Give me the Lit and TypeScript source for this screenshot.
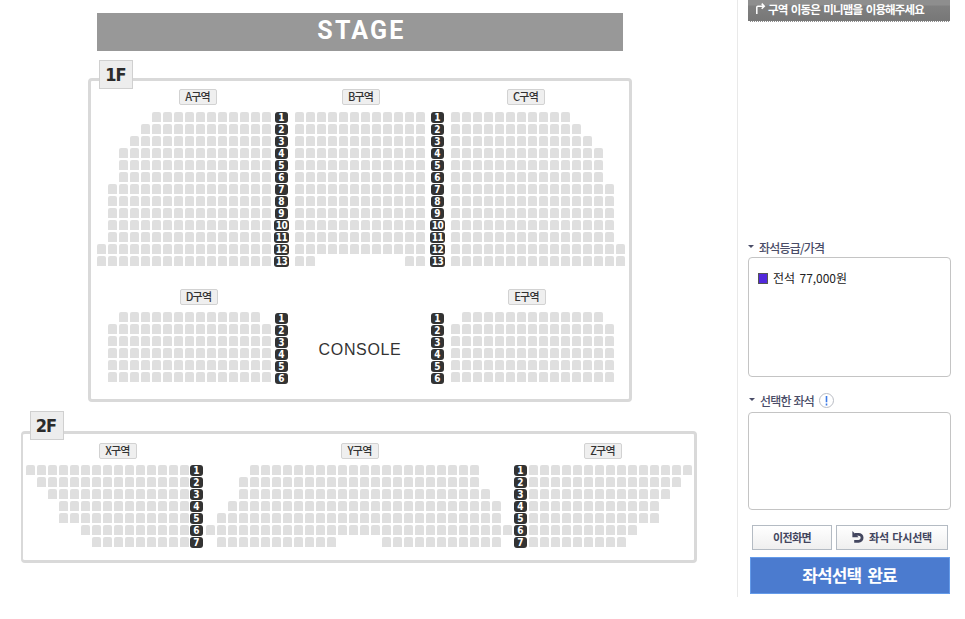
// app.ts
// Seat selection view: hall map on the left, price and selection panel on the right

import { LitElement, html, css } from "lit";
import { customElement, property } from "lit/decorators.js";

// A row alternates empty and seat counts, starting with the empty ones
type Row = number[];

const range = (n: number) => Array.from({ length: n }, (_, i) => i);

const A_ROWS: Row[] = [
  [5, 11],
  [4, 12],
  [3, 13],
  [2, 14],
  [2, 14],
  [2, 14],
  [1, 15],
  [1, 15],
  [1, 15],
  [1, 15],
  [1, 15],
  [0, 16],
  [0, 16],
];
const B_ROWS: Row[] = [...range(12).map(() => [0, 12]), [0, 2, 8, 2]];
const C_ROWS: Row[] = A_ROWS.map(([, count]) => [0, count]);
const D_ROWS: Row[] = [[1, 13], ...range(5).map(() => [0, 15])];
const X_ROWS: Row[] = [
  [0, 15],
  [1, 14],
  [2, 13],
  [3, 12],
  [3, 12],
  [5, 10],
  [6, 9],
];
const Y_ROWS: Row[] = [
  [4, 21],
  [3, 22],
  [3, 23],
  [2, 25],
  [1, 26],
  [0, 28],
  [1, 11, 4, 11],
];
const Z_ROWS: Row[] = X_ROWS.map(([, count]) => [0, count]);

@customElement("seat-section")
export class SeatSection extends LitElement {
  @property() name = "";
  @property({ attribute: false }) rows: Row[] = [];

  static styles = css`
    :host {
      display: flex;
      flex-direction: column;
    }

    .name {
      box-sizing: border-box;
      width: 38px;
      height: 16px;
      margin-left: var(--label-offset, 0);
      margin-bottom: var(--label-gap, 7px);
      border: 1px solid #d2d2d2;
      border-radius: 2px;
      background: #efefef;
      color: #333;
      font-size: 11px;
      font-weight: 500;
      line-height: 13px;
      letter-spacing: -0.8px;
      text-align: center;
      text-indent: -1px;
      white-space: nowrap;
    }

    .row {
      display: flex;
      gap: 2px;
      height: 10px;
      margin-bottom: 2px;
    }

    .cell {
      width: 9px;
      height: 10px;
    }

    .seat {
      background: #dfdfdf;
      border-radius: 2px 2px 0 0;
    }
  `;

  render() {
    return html`
      <div class="name">${this.name}</div>
      ${this.rows.map(
        (row) => html`<div class="row">
          ${row.map((count, i) =>
            range(count).map(
              () => html`<div class=${i % 2 ? "cell seat" : "cell"}></div>`
            )
          )}
        </div>`
      )}
    `;
  }
}

@customElement("row-numbers")
export class RowNumbers extends LitElement {
  @property({ type: Number }) count = 0;

  static styles = css`
    :host {
      display: flex;
      flex-direction: column;
      align-items: center;
      gap: 1px;
      width: 15px;
      padding-top: 23px;
    }

    .number {
      width: 13px;
      height: 11px;
      border-radius: 3px;
      background: #333;
      color: #fff;
      font: bold 10px/11px "DejaVu Sans Condensed", "DejaVu Sans", sans-serif;
      text-align: center;
    }

    .wide {
      width: 15px;
      letter-spacing: -0.5px;
    }
  `;

  render() {
    return range(this.count).map(
      (i) =>
        html`<div class=${i > 8 ? "number wide" : "number"}>${i + 1}</div>`
    );
  }
}

@customElement("seat-map")
export class SeatMap extends LitElement {
  static styles = css`
    :host {
      display: block;
      box-sizing: border-box;
      width: 737px;
      padding-top: 13px;
    }

    .stage {
      width: 526px;
      height: 38px;
      margin-left: 97px;
      background: #989898;
      color: #fff;
      font: bold 25px/36px Roboto, sans-serif;
      letter-spacing: 2.2px;
      text-align: center;
      text-indent: 3px;
    }

    .floor {
      position: relative;
      box-sizing: border-box;
      border: 3px solid #d9d9d9;
      border-radius: 4px;
    }

    .first {
      width: 544px;
      height: 324px;
      margin: 27px 0 0 88px;
      padding-top: 8px;
    }

    .second {
      width: 676px;
      height: 132px;
      margin: 29px 0 0 21px;
      border-left-width: 2px;
      padding-top: 9px;
    }

    .tag {
      position: absolute;
      top: -21px;
      left: 8px;
      box-sizing: border-box;
      width: 34px;
      height: 29px;
      border: 1px solid #d0d0d0;
      background: #ededed;
      color: #2b2b2b;
      font: bold 18px/27px "DejaVu Sans Condensed", "DejaVu Sans", sans-serif;
      letter-spacing: -1px;
      text-align: center;
      text-indent: -1px;
    }

    .second .tag {
      top: -23px;
      left: 7px;
      text-indent: -2px;
    }

    .block {
      display: flex;
    }

    .upper {
      padding-left: 6px;
      gap: 0 3px;
    }

    .lower {
      margin-top: 21px;
      padding-left: 17px;
    }

    .lower row-numbers {
      padding-top: 24px;
    }

    .balcony {
      --label-gap: 6px;
      padding-left: 3px;
    }

    .balcony row-numbers {
      padding-top: 22px;
    }

    .a {
      --label-offset: 82px;
    }

    .b {
      --label-offset: 47px;
      margin: 0 2px 0 3px;
    }

    .c {
      --label-offset: 56px;
      margin-left: 3px;
    }

    .d {
      --label-offset: 72px;
      margin-right: 3px;
    }

    .e {
      --label-offset: 57px;
      margin-left: 6px;
    }

    .x {
      --label-offset: 73px;
    }

    .y {
      --label-offset: 135px;
      margin: 0 1px 0 2px;
    }

    .z {
      --label-offset: 55px;
      margin-left: 1px;
    }

    .console {
      width: 141px;
      padding-top: 51px;
      color: #333;
      font: 16px/20px "Liberation Sans", Arial, sans-serif;
      letter-spacing: 0.65px;
      text-align: center;
      text-indent: 1px;
    }
  `;

  render() {
    return html`
      <div class="stage">STAGE</div>
      <div class="floor first">
        <div class="tag">1F</div>
        <div class="block upper">
          <seat-section class="a" name="A구역" .rows=${A_ROWS}></seat-section>
          <row-numbers count="13"></row-numbers>
          <seat-section class="b" name="B구역" .rows=${B_ROWS}></seat-section>
          <row-numbers count="13"></row-numbers>
          <seat-section class="c" name="C구역" .rows=${C_ROWS}></seat-section>
        </div>
        <div class="block lower">
          <seat-section class="d" name="D구역" .rows=${D_ROWS}></seat-section>
          <row-numbers count="6"></row-numbers>
          <div class="console">CONSOLE</div>
          <row-numbers count="6"></row-numbers>
          <seat-section class="e" name="E구역" .rows=${D_ROWS}></seat-section>
        </div>
      </div>
      <div class="floor second">
        <div class="tag">2F</div>
        <div class="block balcony">
          <seat-section class="x" name="X구역" .rows=${X_ROWS}></seat-section>
          <row-numbers count="7"></row-numbers>
          <seat-section class="y" name="Y구역" .rows=${Y_ROWS}></seat-section>
          <row-numbers count="7"></row-numbers>
          <seat-section class="z" name="Z구역" .rows=${Z_ROWS}></seat-section>
        </div>
      </div>
    `;
  }
}

@customElement("side-panel")
export class SidePanel extends LitElement {
  static styles = css`
    :host {
      display: block;
      box-sizing: border-box;
      width: 228px;
      height: 597px;
      padding-left: 10px;
      border-left: 1px solid #e9e9e9;
    }

    .notice {
      display: flex;
      box-sizing: border-box;
      width: 202px;
      height: 22px;
      padding: 0 0 0 7px;
      border-bottom: 1px dotted #fff;
      background: linear-gradient(#8e8e8e 0 5px, #808080 6px, #777);
      color: #fff;
      font-size: 11.5px;
      font-weight: 700;
      line-height: 18px;
      letter-spacing: -0.85px;
      word-spacing: 1.6px;
      white-space: nowrap;
    }

    .notice svg {
      flex: none;
      width: 11px;
      height: 12px;
      margin: 3px 2px 0 0;
    }

    .title {
      display: flex;
      align-items: center;
      height: 18px;
      color: #4a4d68;
      font-size: 12px;
      font-weight: 500;
      letter-spacing: -0.8px;
      word-spacing: 1px;
      white-space: nowrap;
    }

    .title::before {
      content: "";
      margin: 0 5px 2px 0;
      border: 3px solid transparent;
      border-top-color: #4a4d68;
      border-bottom: 0;
    }

    .prices {
      margin-top: 216px;
    }

    .selected {
      margin-top: 14px;
      padding-left: 1px;
    }

    .box {
      box-sizing: border-box;
      width: 203px;
      height: 120px;
      margin-top: 1px;
      padding: 9px 9px;
      border: 1px solid #c4c4c4;
      border-radius: 4px;
    }

    .short {
      height: 98px;
      margin-top: 3px;
    }

    .grade {
      display: flex;
      align-items: center;
      height: 20px;
      color: #222;
      font-size: 12px;
      letter-spacing: -0.05px;
      word-spacing: 2px;
    }

    .swatch {
      box-sizing: border-box;
      width: 10px;
      height: 11px;
      margin: 2px 5px 0 0;
      border: 1px solid #555;
      background: #5128dc;
    }

    .info {
      width: 15px;
      height: 15px;
      margin: 0 0 0 5px;
    }

    .buttons {
      display: flex;
      gap: 4px;
      margin: 15px 0 0 4px;
    }

    button {
      display: flex;
      align-items: center;
      justify-content: center;
      box-sizing: border-box;
      width: 80px;
      height: 25px;
      padding: 0 0 1px;
      border: 1px solid #b4bbc3;
      background: linear-gradient(#fff, #efefef);
      color: #43465f;
      font: 700 11px/20px "Noto Sans CJK KR", sans-serif;
      letter-spacing: -0.6px;
      white-space: nowrap;
    }

    .again {
      width: 112px;
      letter-spacing: -0.15px;
      word-spacing: 1px;
    }

    .again svg {
      width: 12px;
      height: 12px;
      margin-right: 5px;
    }

    .done {
      width: 200px;
      height: 37px;
      margin: 7px 0 0 2px;
      border-color: #649bea;
      background: #4b7bcf;
      color: #fff;
      font-size: 17px;
      letter-spacing: -0.9px;
      word-spacing: 3px;
      text-indent: -1px;
    }
  `;

  render() {
    return html`
      <div class="notice">
        <svg viewBox="0 0 11 12" fill="none" stroke="#fff" stroke-width="1.5">
          <path d="M1.8 11V4.2q0-1 1-1H9M6.7.6 9.3 3.2 6.7 5.8" />
        </svg>
        구역 이동은 미니맵을 이용해주세요
      </div>
      <div class="title prices">좌석등급/가격</div>
      <div class="box">
        <div class="grade"><span class="swatch"></span>전석 77,000원</div>
      </div>
      <div class="title selected">
        선택한 좌석
        <svg class="info" viewBox="0 0 15 15">
          <circle cx="7.5" cy="7.5" r="7" fill="#fff" stroke="#b9bcc4" />
          <path d="M7.5 3v6.2M7.5 10.5v2" stroke="#3d7be6" stroke-width="1.6" />
        </svg>
      </div>
      <div class="box short"></div>
      <div class="buttons">
        <button>이전화면</button>
        <button class="again">
          <svg viewBox="0 0 12 12" fill="none" stroke="#43465f">
            <path d="M3 3.3h3.6a3.5 3.5 0 0 1 0 7H2.2" stroke-width="2.8" />
            <path d="M.4 0v6.2h6.2z" fill="#43465f" stroke="none" />
          </svg>
          좌석 다시선택
        </button>
      </div>
      <button class="done">좌석선택 완료</button>
    `;
  }
}

@customElement("app-root")
export class AppRoot extends LitElement {
  static styles = css`
    :host {
      display: flex;
      width: 965px;
      height: 619px;
      overflow: hidden;
      background: #fff;
      font-family: "Noto Sans CJK KR", sans-serif;
    }
  `;

  render() {
    return html`
      <seat-map></seat-map>
      <side-panel></side-panel>
    `;
  }
}
